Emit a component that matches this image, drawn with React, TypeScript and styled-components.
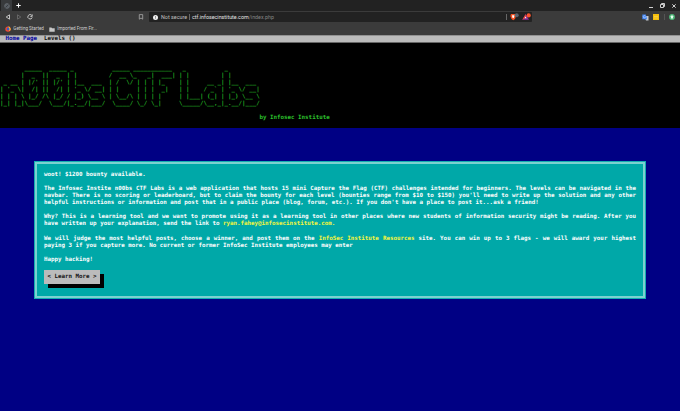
import React from "react";
import styled, { createGlobalStyle } from "styled-components";

const Global = createGlobalStyle`
  * { box-sizing: border-box; }
  html, body { margin: 0; height: 100%; overflow: hidden; background: #000084; }
`;

const Screen = styled.div`
  width: 680px;
  height: 411px;
  display: flex;
  flex-direction: column;
  overflow: hidden;
  background: #000084;
  font-family: "DejaVu Sans Mono", monospace;
  font-size: 5.83px;
  line-height: 7.08px;
`;

const TabBar = styled.div`
  height: 11px;
  display: flex;
  align-items: center;
  justify-content: space-between;
  background: #222222;
`;

const TabGroup = styled.div`
  display: flex;
  height: 11px;
  align-items: center;
  gap: 3.5px;
`;

const Tab = styled.div`
  width: 11px;
  height: 11px;
  margin-left: 1px;
  display: flex;
  align-items: center;
  justify-content: center;
  background: #383a3c;
`;

const WindowControls = styled.div`
  display: flex;
  align-items: center;
  gap: 7px;
  padding-right: 4.5px;
`;

const Icon = styled.svg`
  display: block;
  flex: none;
  fill: none;
  stroke: #d0d0d0;
  stroke-width: 1;
`;

const Toolbar = styled.div`
  height: 12px;
  display: flex;
  align-items: center;
  background: #3b3b3b;
`;

const NavButtons = styled.div`
  width: 138px;
  display: flex;
  gap: 5px;
  padding-left: 5px;
`;

const AddressBar = styled.div`
  width: 383px;
  height: 10px;
  margin-left: 5px;
  display: flex;
  align-items: center;
  background: #222222;
  border-radius: 1px;
  padding-left: 3.5px;
  font: 5.6px/10px Roboto, sans-serif;
  color: #e4e4e4;
`;

const NotSecure = styled.span`
  width: 26px;
  margin-left: 3.5px;
  color: #c0c0c0;
  font-size: 5.4px;
  white-space: nowrap;
`;

const Divider = styled.i<{ $gap: number }>`
  width: 1px;
  height: 6px;
  margin: 0 ${(p) => p.$gap}px;
  background: #666;
`;

const Address = styled.span`
  flex: 1;
  white-space: nowrap;
  font-size: 5.35px;
`;

const AddressPath = styled.span`
  color: #858585;
`;

const Shields = styled.div`
  display: flex;
  gap: 3px;
  padding-right: 1px;
`;

const Extensions = styled.div`
  flex: 1;
  display: flex;
  align-items: center;
  justify-content: flex-end;
  gap: 4.5px;
  padding-right: 5px;
`;

const Bookmarks = styled.div`
  height: 12px;
  display: flex;
  align-items: center;
  gap: 5px;
  padding-left: 5px;
  background: #3b3b3b;
  font: 4.55px/10px Roboto, sans-serif;
  color: #d0d0d0;
`;

const Bookmark = styled.span`
  display: flex;
  align-items: center;
  gap: 2.3px;
  white-space: nowrap;
`;

const SiteNav = styled.nav`
  height: 8px;
  flex: none;
  display: flex;
  align-items: center;
  gap: 6.8px;
  padding-left: 5.5px;
  background: #bbbbbb;
  border-top: 1px solid #929292;
  border-bottom: 1px solid #666;
  font-weight: bold;
  color: #000;
`;

const NavLink = styled.span<{ $active?: boolean }>`
  color: ${(p) => (p.$active ? "#0000a0" : "#111")};
`;

const Banner = styled.header`
  height: 84.5px;
  flex: none;
  background: #000;
  padding-top: 21.5px;
  color: #24b024;
`;

const Logo = styled.pre`
  margin: 0;
  font: inherit;
  font-weight: bold;
`;

const Byline = styled.div`
  margin-top: 7px;
  padding-left: 259.5px;
  font-weight: bold;
  color: #2cc02c;
`;

const Panel = styled.main`
  width: 612px;
  height: 138px;
  margin: 33.5px 0 0 34px;
  padding: 1px;
  background: #14aeb0;
`;

const PanelFrame = styled.div`
  height: 136px;
  border: 2px solid #7bd1d0;
  padding: 6.8px 7px 0;
  background: #00a8a8;
  color: #fff;
  font-weight: bold;
`;

const Paragraph = styled.p`
  margin: 0 0 7.08px;
`;

const Line = styled.span<{ $fill?: boolean }>`
  display: block;
  width: 592px;
  height: 7.08px;
  white-space: nowrap;
  text-align: justify;
  text-align-last: ${(p) => (p.$fill ? "justify" : "left")};
`;

const Highlight = styled.span`
  color: #f6f63c;
`;

const LearnMore = styled.button`
  display: block;
  width: 56px;
  height: 14px;
  margin: 0;
  padding: 0;
  border: 0;
  background: #bbbbbb;
  box-shadow: 4px 4px 0 #000;
  color: #111;
  font: inherit;
  text-align: center;
  white-space: pre;
`;

const LOGO = [
  "       _____  _____ _           _____ ___________   _           _         ",
  "      |  _  ||  _  | |         /  __ \\_   _|  ___| | |         | |        ",
  " _ __ | |/' || |/' | |__  ___  | /  \\/ | | | |_    | |     __ _| |__  ___ ",
  "| '_ \\|  /| ||  /| | '_ \\/ __| | |     | | |  _|   | |    / _` | '_ \\/ __|",
  "| | | \\ |_/ /\\ |_/ / |_) \\__ \\ | \\__/\\ | | | |     | |___| (_| | |_) \\__ \\",
  "|_| |_|\\___/  \\___/|_.__/|___/  \\____/ \\_/ \\_|     \\_____/\\__,_|_.__/|___/",
].join("\n");

export default function App() {
  return (
    <Screen>
      <Global />
      <TabBar>
        <TabGroup>
          <Tab>
            <Icon width="6" height="6" viewBox="0 0 6 6" stroke="none">
              <circle cx="3" cy="3" r="2.4" fill="#555b61" stroke="#6b7076" strokeWidth=".7" />
              <path d="M1.5 4.5 4.5 1.5" stroke="#303236" strokeWidth=".8" />
            </Icon>
          </Tab>
          <Icon width="5" height="5" viewBox="0 0 5 5">
            <path d="M2.5 .3v4.4M.3 2.5h4.4" stroke="#fff" />
          </Icon>
        </TabGroup>
        <WindowControls>
          <Icon width="4" height="5" viewBox="0 0 4 5"><path d="M0 4.5h4" /></Icon>
          <Icon width="5" height="5" viewBox="0 0 5 5"><path d="M1.5 1.5V.5h3v3h-1M.5 1.5h3v3h-3z" /></Icon>
          <Icon width="4" height="4" viewBox="0 0 4 4"><path d="m.3.3 3.4 3.4M3.7.3.3 3.7" /></Icon>
        </WindowControls>
      </TabBar>

      <Toolbar>
        <NavButtons>
          <Icon width="6" height="6" viewBox="0 0 6 6"><path d="M4.5.8v4.4L1.2 3z" strokeWidth=".9" /></Icon>
          <Icon width="6" height="6" viewBox="0 0 6 6"><path d="M1.5.8v4.4L4.8 3z" stroke="#707070" strokeWidth=".8" /></Icon>
          <Icon width="6" height="6" viewBox="0 0 6 6"><path d="M4.8 1.4A2.2 2.2 0 1 0 5.2 3.4M5.2.4v2H3.3" strokeWidth=".9" /></Icon>
        </NavButtons>
        <Icon width="6" height="6" viewBox="0 0 6 6"><path d="M1.3.6h3.4v4.6L3 4 1.3 5.2z" stroke="#aaa" strokeWidth=".8" /></Icon>
        <AddressBar>
          <Icon width="5" height="5" viewBox="0 0 5 5">
            <circle cx="2.5" cy="2.5" r="2.5" fill="#f0f0f0" stroke="none" />
            <path d="M2.5 1.1v1.7M2.5 3.4v.6" stroke="#555" strokeWidth=".7" />
          </Icon>
          <NotSecure>Not secure</NotSecure>
          <Divider $gap={2} />
          <Address>ctf.infosecinstitute.com<AddressPath>/index.php</AddressPath></Address>
          <Divider $gap={3} />
          <Shields>
            <Icon width="9" height="8" viewBox="0 0 9 8">
              <path d="M1 1h4.5l.6 2L5 6 3.2 7.3 1.5 6 .3 3z" fill="#f25022" stroke="none" />
              <path d="M2 2.2h2.5L4 4.5l-.8.8-.9-.8z" fill="#fff" stroke="none" />
              <circle cx="6.7" cy="2.3" r="2" fill="#5c626b" stroke="none" />
            </Icon>
            <Icon width="9" height="8" viewBox="0 0 9 8">
              <path d="M3.7 1 7 6.7H.3z" fill="#8b2d93" stroke="none" />
              <path d="M3.7 1 .3 6.7l3.4-2z" fill="#f0482c" stroke="none" />
              <path d="m3.6 3.4 1 1.9h-2z" fill="#fff" stroke="none" />
              <circle cx="6.7" cy="2.4" r="2.1" fill="#fb542b" stroke="none" />
            </Icon>
          </Shields>
        </AddressBar>
        <Extensions>
          <Icon width="7" height="7" viewBox="0 0 7 7">
            <path d="M2.5 2H6.5v4.5H4z" fill="#c4c8ce" stroke="none" />
            <path d="M.3.5h3.5l1.3 4.7H.3z" fill="#4285f4" stroke="none" />
            <path d="M3.4 2.2A1.2 1.2 0 1 0 3.5 3.2H2.5" stroke="#dbe8ff" strokeWidth=".5" />
          </Icon>
          <Icon width="6" height="6" viewBox="0 0 6 6">
            <path d="M0 0h6v6H0z" fill="#f6bf0c" stroke="none" />
            <path d="M1 2.5h4M1 4h4" stroke="#fbd95d" strokeWidth=".6" />
          </Icon>
          <Icon width="1" height="6" viewBox="0 0 1 6"><path d="M.5 0v6" stroke="#555" /></Icon>
          <Icon width="6" height="6" viewBox="0 0 6 6">
            <circle cx="3" cy="3" r="2.9" fill="#50b878" stroke="none" />
            <path d="m3 1.1 1.8 1.8H4v1.6H2V2.9h-.8z" fill="#e5fff0" stroke="none" />
          </Icon>
        </Extensions>
      </Toolbar>

      <Bookmarks>
        <Bookmark>
          <Icon width="6" height="6" viewBox="0 0 6 6">
            <circle cx="3" cy="3.1" r="2.7" fill="#f4472e" stroke="none" />
            <path d="M3.4.2C5 .8 5.9 2.2 5.6 4L4.5 5.2 3.8 2z" fill="#ffc52e" stroke="none" />
            <circle cx="3.1" cy="3" r="1.4" fill="#345fc5" stroke="none" />
          </Icon>
          Getting Started
        </Bookmark>
        <Bookmark>
          <Icon width="6" height="5" viewBox="0 0 6 5">
            <path d="M.3.4h2.1l.7.8h2.6v3.5H.3z" fill="#c8c8c8" stroke="none" />
          </Icon>
          Imported From Fir...
        </Bookmark>
      </Bookmarks>

      <SiteNav>
        <NavLink $active>Home Page</NavLink>
        <NavLink>Levels ()</NavLink>
      </SiteNav>

      <Banner>
        <Logo>{LOGO}</Logo>
        <Byline>by Infosec Institute</Byline>
      </Banner>

      <Panel>
        <PanelFrame>
          <Paragraph><Line>woot! $1200 bounty available.</Line></Paragraph>
          <Paragraph>
            <Line $fill>The Infosec Instite n00bs CTF Labs is a web application that hosts 15 mini Capture the Flag (CTF) challenges intended for beginners. The levels can be navigated in the</Line>
            <Line $fill>navbar. There is no scoring or leaderboard, but to claim the bounty for each level (bounties range from $10 to $150) you'll need to write up the solution and any other</Line>
            <Line>helpful instructions or information and post that in a public place (blog, forum, etc.). If you don't have a place to post it...ask a friend!</Line>
          </Paragraph>
          <Paragraph>
            <Line $fill>Why? This is a learning tool and we want to promote using it as a learning tool in other places where new students of information security might be reading. After you</Line>
            <Line>have written up your explanation, send the link to <Highlight>ryan.fahey@infosecinstitute.com.</Highlight></Line>
          </Paragraph>
          <Paragraph>
            <Line $fill>We will judge the most helpful posts, choose a winner, and post them on the <Highlight>InfoSec Institute Resources</Highlight> site. You can win up to 3 flags - we will award your highest</Line>
            <Line>paying 3 if you capture more. No current or former InfoSec Institute employees may enter</Line>
          </Paragraph>
          <Paragraph><Line>Happy hacking!</Line></Paragraph>
          <LearnMore>&lt; Learn More &gt;</LearnMore>
        </PanelFrame>
      </Panel>
    </Screen>
  );
}
